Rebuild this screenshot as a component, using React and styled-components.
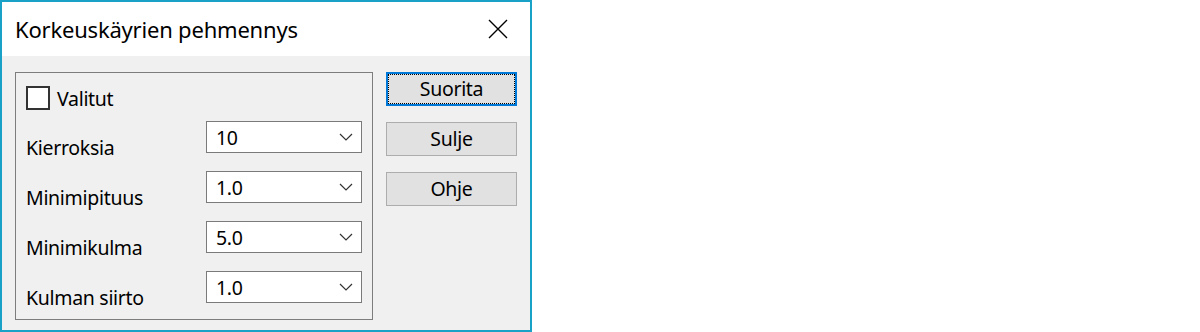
import styled, { createGlobalStyle } from 'styled-components';

const GlobalStyle = createGlobalStyle`
  body {
    margin: 0;
    background: #fff;
    font-family: "Noto Sans", "Open Sans", sans-serif;
  }
`;

const Window = styled.div`
  width: 532px;
  height: 332px;
  box-sizing: border-box;
  border: 2px solid #1aa1c7;
  display: flex;
  flex-direction: column;
  color: #000;
`;

const TitleBar = styled.div`
  height: 54px;
  flex-shrink: 0;
  background: #fff;
  display: flex;
  align-items: center;
  justify-content: space-between;
  padding: 0 22px 0 13px;
`;

const Title = styled.div`
  font-size: 22px;
  letter-spacing: -0.2px;
  padding-bottom: 1px;
`;

const CloseButton = styled.button`
  background: transparent;
  border: 0;
  padding: 0;
  width: 20px;
  height: 20px;
  display: flex;
  cursor: pointer;
`;

const Body = styled.div`
  flex: 1;
  background: #f0f0f0;
  display: flex;
  align-items: flex-start;
  gap: 13px;
  padding: 16px 13px 0 13px;
`;

const GroupBox = styled.div`
  width: 358px;
  height: 248px;
  box-sizing: border-box;
  border: 1px solid #7d7d7d;
  padding: 13px 0 0 10px;
`;

const CheckRow = styled.label`
  display: flex;
  align-items: center;
  gap: 7px;
  height: 24px;
  font-size: 19.5px;
  letter-spacing: -0.3px;
`;

const CheckBox = styled.span`
  width: 24px;
  height: 24px;
  box-sizing: border-box;
  border: 2px solid #333;
  background: #fff;
`;

const Fields = styled.div`
  margin-top: 11px;
  display: flex;
  flex-direction: column;
  gap: 18px;
`;

const Row = styled.div`
  display: flex;
  align-items: flex-start;
  height: 32px;
`;

const Label = styled.div`
  width: 180px;
  padding-top: 15px;
  line-height: 24px;
  font-size: 19.5px;
  letter-spacing: -0.3px;
`;

const Select = styled.div`
  width: 156px;
  height: 32px;
  box-sizing: border-box;
  border: 1px solid #7a7a7a;
  background: #fff;
  display: flex;
  align-items: center;
  justify-content: space-between;
  padding: 0 8px 0 9px;
  font-size: 19.5px;
  letter-spacing: -0.3px;
`;

const Buttons = styled.div`
  display: flex;
  flex-direction: column;
  gap: 16px;
  width: 131px;
`;

const Button = styled.button`
  height: 34px;
  box-sizing: border-box;
  background: #e1e1e1;
  border: ${p => (p.$default ? '2px solid #0078d7' : '1px solid #adadad')};
  outline: ${p => (p.$default ? '1px dotted #000' : 'none')};
  outline-offset: -3px;
  font-family: inherit;
  font-size: 19.5px;
  letter-spacing: -0.3px;
  color: #000;
  padding: 0 0 2px;
`;

const Chevron = () => (
  <svg width="14" height="8" viewBox="0 0 14 8">
    <path d="M1 1 L7 7 L13 1" fill="none" stroke="#333" strokeWidth="1.2" />
  </svg>
);

const fields = [
  ['Kierroksia', '10'],
  ['Minimipituus', '1.0'],
  ['Minimikulma', '5.0'],
  ['Kulman siirto', '1.0'],
];

export default function App() {
  return (
    <>
      <GlobalStyle />
      <Window>
        <TitleBar>
          <Title>Korkeuskäyrien pehmennys</Title>
          <CloseButton>
            <svg width="20" height="20" viewBox="0 0 20 20">
              <path d="M1 1 L19 19 M19 1 L1 19" stroke="#000" strokeWidth="1.4" />
            </svg>
          </CloseButton>
        </TitleBar>
        <Body>
          <GroupBox>
            <CheckRow>
              <CheckBox />
              Valitut
            </CheckRow>
            <Fields>
              {fields.map(([label, value]) => (
                <Row key={label}>
                  <Label>{label}</Label>
                  <Select>
                    {value}
                    <Chevron />
                  </Select>
                </Row>
              ))}
            </Fields>
          </GroupBox>
          <Buttons>
            <Button $default>Suorita</Button>
            <Button>Sulje</Button>
            <Button>Ohje</Button>
          </Buttons>
        </Body>
      </Window>
    </>
  );
}
